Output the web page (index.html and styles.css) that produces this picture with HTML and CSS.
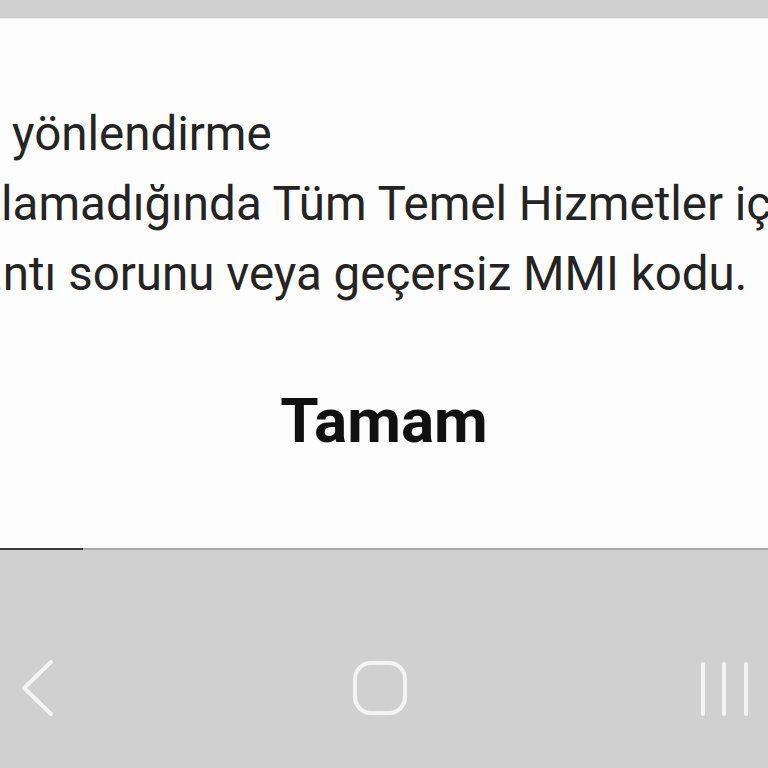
FILE: index.html
```
<!DOCTYPE html>
<html lang="tr">
<head>
<meta charset="utf-8">
<link rel="stylesheet" href="styles.css">
</head>
<body>
<div class="screen">
  <div class="status"></div>
  <div class="dialog">
    <div class="message">
      <div class="line l1">yönlendirme</div>
      <div class="line l2">lamadığında Tüm Temel Hizmetler için</div>
      <div class="line l3">antı sorunu veya geçersiz MMI kodu.</div>
    </div>
    <div class="actions"><span class="ok">Tamam</span></div>
  </div>
  <div class="rule"><div class="rule-dark"></div></div>
  <div class="nav">
    <svg class="ico back" width="40" height="60" viewBox="0 0 40 60"><polyline points="33,4 6,30 33,56" fill="none" stroke="#f4f4f4" stroke-width="4" stroke-linecap="round" stroke-linejoin="round"/></svg>
    <svg class="ico home" width="60" height="60" viewBox="0 0 60 60"><rect x="5" y="5" width="50" height="50" rx="16" fill="none" stroke="#f4f4f4" stroke-width="4"/></svg>
    <svg class="ico recents" width="60" height="60" viewBox="0 0 60 60"><g stroke="#f4f4f4" stroke-width="4" stroke-linecap="round"><line x1="7" y1="6" x2="7" y2="56"/><line x1="28" y1="6" x2="28" y2="56"/><line x1="50" y1="6" x2="50" y2="56"/></g></svg>
  </div>
</div>
</body>
</html>
```
FILE: styles.css
```
html, body {
  margin: 0;
  padding: 0;
}
body {
  width: 768px;
  height: 768px;
  overflow: hidden;
  background: #d0d0d0;
  font-family: Roboto, "Noto Sans", "Liberation Sans", sans-serif;
}
.screen {
  display: flex;
  flex-direction: column;
  width: 768px;
  height: 768px;
}
.status {
  height: 18px;
  background: #cfcfcf;
  border-bottom: 1px solid #ececec;
}
.dialog {
  height: 529px;
  background: #fdfdfd;
  overflow: hidden;
  display: flex;
  flex-direction: column;
}
.message {
  padding-top: 80px;
  color: #242424;
  font-size: 47.5px;
  line-height: 70px;
}
.line {
  white-space: nowrap;
}
.l1 { padding-left: 12px; }
.l2 { padding-left: 1px; }
.l3 { margin-left: -23px; }
.actions {
  display: flex;
  justify-content: center;
  padding-top: 77px;
}
.ok {
  font-weight: 700;
  font-size: 62px;
  line-height: 70px;
  color: #111111;
}
.rule {
  height: 2px;
  background: #a9a9a9;
}
.rule-dark {
  width: 83px;
  height: 2px;
  background: #3a3a3a;
}
.nav {
  flex: 1;
  display: flex;
  align-items: flex-start;
  padding-top: 108px;
  padding-left: 18px;
  background: #d0d0d0;
}
.home { margin-left: 292px; }
.recents { margin-left: 286px; }
```
